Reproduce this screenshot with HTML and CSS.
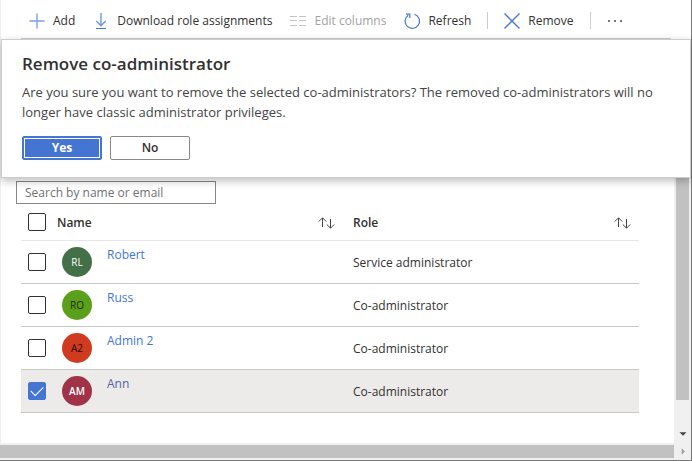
FILE: index.html
```html
<!DOCTYPE html>
<html lang="en">
<head>
<meta charset="utf-8">
<title>Classic administrators</title>
<link rel="stylesheet" href="styles.css">
</head>
<body>
<div class="window">
  <main class="content">
    <div class="toolbar" role="toolbar" aria-label="Commands">
      <button class="command" type="button">
        <svg class="icon" viewBox="0 0 16 16"><path d="M8 .500v15M.500 8h15" stroke="#7ea0e2" stroke-width="1.400"/></svg>
        Add
      </button>
      <button class="command" type="button">
        <svg class="icon" viewBox="0 0 16 16"><path d="M8 0v12.500M3.300 8 8 12.700 12.700 8" fill="none" stroke="#6f96e0" stroke-width="1.400"/><path d="M3 15.500h10" stroke="#4575d3"/></svg>
        Download role assignments
      </button>
      <button class="command" type="button" disabled>
        <svg class="icon" viewBox="0 0 16 16"><path d="M0 3.500h7M9 3.500h7M0 7.500h7M9 7.500h7M0 12.500h7M9 12.500h7" stroke="#c4c4c4"/></svg>
        Edit columns
      </button>
      <button class="command" type="button">
        <svg class="icon" viewBox="0 0 16 16"><path d="M10.500 1.300A7.200 7.200 0 1 1 4.200 2.200" fill="none" stroke="#4575d3" stroke-width="1.200"/><path d="M2 1.200H5.800V5" fill="none" stroke="#4575d3" stroke-width="1.200"/></svg>
        Refresh
      </button>
      <span class="separator"></span>
      <button class="command" type="button">
        <svg class="icon" viewBox="0 0 16 16"><path d="M.5.5l15 15M15.500.5l-15 15" stroke="#4575d3" stroke-width="1.300"/></svg>
        Remove
      </button>
      <span class="separator"></span>
      <button class="command" type="button" aria-label="More">
        <svg class="icon" viewBox="0 0 16 16"><path d="M1 7h2v2H1zM7 7h2v2H7zM13 7h2v2h-2z" fill="#777"/></svg>
      </button>
    </div>

    <input class="search" type="text" placeholder="Search by name or email" aria-label="Search by name or email">

    <table class="admins">
      <colgroup><col class="col-check"><col><col></colgroup>
      <thead>
        <tr>
          <th><input class="check" type="checkbox" aria-label="Select all"></th>
          <th><div class="heading">Name
            <svg class="sort" viewBox="0 0 17 12"><path d="M4.500 10V1M.8 4.500 4.500.8l3.700 3.700M12.500 2v9M8.800 7.500l3.700 3.700 3.700-3.700" fill="none" stroke="#444"/></svg></div></th>
          <th><div class="heading">Role
            <svg class="sort" viewBox="0 0 17 12"><path d="M4.500 10V1M.8 4.500 4.500.8l3.700 3.700M12.500 2v9M8.800 7.500l3.700 3.700 3.700-3.700" fill="none" stroke="#444"/></svg></div></th>
        </tr>
      </thead>
      <tbody>
        <tr>
          <td><input class="check" type="checkbox" aria-label="Select Robert"></td>
          <td><div class="person"><span class="avatar green">RL</span><a href="#">Robert</a></div></td>
          <td>Service administrator</td>
        </tr>
        <tr>
          <td><input class="check" type="checkbox" aria-label="Select Russ"></td>
          <td><div class="person"><span class="avatar lime">RO</span><a href="#">Russ</a></div></td>
          <td>Co-administrator</td>
        </tr>
        <tr>
          <td><input class="check" type="checkbox" aria-label="Select Admin 2"></td>
          <td><div class="person"><span class="avatar red">A2</span><a href="#">Admin 2</a></div></td>
          <td>Co-administrator</td>
        </tr>
        <tr class="selected">
          <td><input class="check" type="checkbox" aria-label="Select Ann" checked></td>
          <td><div class="person"><span class="avatar wine">AM</span><a href="#">Ann</a></div></td>
          <td>Co-administrator</td>
        </tr>
      </tbody>
    </table>
  </main>

  <div class="scroll-v"><span class="thumb-v"></span>
    <svg class="arrow" viewBox="0 0 16 16"><path d="M4 6h8l-4 4z" fill="#444"/></svg>
  </div>
  <div class="scroll-h"><span class="thumb-h"></span>
    <svg class="arrow" viewBox="0 0 16 16"><path d="M7 4v8l4-4z" fill="#a0a0a0"/></svg>
  </div>

  <section class="dialog" role="dialog" aria-labelledby="dialog-title">
    <h1 id="dialog-title">Remove co-administrator</h1>
    <p>Are you sure you want to remove the selected co-administrators? The removed co-administrators will no longer have classic administrator privileges.</p>
    <div class="actions">
      <button class="button primary" type="button">Yes</button>
      <button class="button" type="button">No</button>
    </div>
  </section>
</div>
</body>
</html>
```

FILE: styles.css
```css
* {
  box-sizing: border-box;
}

body {
  margin: 0;
  background: #fff;
  color: #323130;
  font-family: "Open Sans", "Noto Sans", sans-serif;
  font-size: 12px;
  line-height: 18px;
}

button,
input {
  font: inherit;
  color: inherit;
}

.window {
  position: relative;
  display: grid;
  grid-template-columns: 1fr 17px;
  grid-template-rows: 1fr 17px;
  min-height: 100vh;
  border-right: 1px solid #777;
  border-bottom: 1px solid #777;
}

.content {
  border-left: 1px solid #eee;
}

.toolbar {
  display: flex;
  align-items: center;
  gap: 18px;
  height: 39px;
  margin: 0 3px 0 20px;
  padding: 3px 8px 0;
  border-bottom: 1px solid #ccc;
}

.command {
  display: flex;
  align-items: center;
  gap: 8px;
  padding: 0;
  border: 0;
  background: none;
  white-space: nowrap;
}

.command:disabled {
  color: #a3a3a3;
}

.icon {
  flex: none;
  width: 16px;
  height: 16px;
}

.separator {
  width: 1px;
  height: 17px;
  margin: 0 -2px;
  background: #ccc;
}

.search {
  display: block;
  width: 200px;
  height: 23px;
  margin: 142px 0 0 15px;
  padding: 0 8px;
  border: 1px solid #8a8886;
}

.search::placeholder {
  color: #707070;
  opacity: 1;
}

.admins {
  width: calc(100% - 55px);
  margin: 0 35px 30px 20px;
  border-collapse: separate;
  border-spacing: 0;
  table-layout: fixed;
}

.col-check {
  width: 30px;
}

.admins th {
  height: 37px;
  padding: 2px 8px 0;
  border-bottom: 1px solid #e6e6e6;
  font-weight: 600;
  text-align: left;
}

.admins td {
  height: 43px;
  padding: 2px 8px 0;
  border-bottom: 1px solid #c8c8c8;
}

.admins th:first-child,
.admins td:first-child {
  padding: 0 0 0 7px;
}

.admins th:nth-child(2) {
  padding: 2px 10px 0 6px;
}

.admins td:nth-child(2) {
  padding: 0 11px;
}

.heading {
  display: flex;
  align-items: center;
  justify-content: space-between;
}

.sort {
  width: 17px;
  height: 12px;
}

.check {
  display: block;
  appearance: none;
  width: 18px;
  height: 18px;
  margin: 0;
  border: 1px solid #323130;
  border-radius: 2px;
  background: #fff;
}

.check:checked {
  border-color: #4575d3;
  background: #4575d3;
}

.check:checked::after {
  content: "";
  display: block;
  width: 11px;
  height: 6px;
  margin: 3px 0 0 2px;
  border: solid #fff;
  border-width: 0 0 1px 1px;
  transform: rotate(-45deg);
}

.person {
  display: flex;
  gap: 15px;
}

.person a {
  margin-top: -1px;
  color: #4575d3;
  text-decoration: none;
}

.avatar {
  width: 30px;
  height: 30px;
  border-radius: 50%;
  font-size: 10px;
  line-height: 30px;
  text-align: center;
}

.green {
  background: #437047;
  color: #fff;
}

.lime {
  background: #5ba01a;
  color: #1b2b08;
}

.red {
  background: #d03a1f;
  color: #2a0a05;
}

.wine {
  background: #a03348;
  color: #fff;
  font-weight: 600;
}

.selected {
  background: #edebe9;
}

.selected .person a {
  color: #4f63a8;
}

.scroll-v {
  display: flex;
  flex-direction: column;
  justify-content: space-between;
  margin-top: 39px;
  padding-left: 2px;
  background: #f0f0f0;
}

.thumb-v {
  width: 13px;
  height: 361px;
  background: #c1c1c1;
}

.scroll-h {
  grid-column: 1 / -1;
  display: flex;
  justify-content: space-between;
  padding: 2px 0 2px;
  background: #f0f0f0;
}

.thumb-h {
  flex: 1;
  background: #c1c1c1;
}

.arrow {
  width: 16px;
  height: 16px;
}

.scroll-v .arrow {
  width: 14px;
  margin-bottom: 1px;
}

.scroll-h .arrow {
  width: 17px;
  height: 13px;
}

.dialog {
  position: absolute;
  top: 39px;
  left: 1px;
  right: 0;
  padding: 14px 20px 17px;
  border: 1px solid #ccc;
  background: #fff;
  box-shadow: 0 3px 8px rgba(0, 0, 0, 0.25);
}

.dialog h1 {
  margin: 0 0 8px;
  font-size: 17px;
  font-weight: 600;
  line-height: 20px;
}

.dialog p {
  margin: 0 0 14px;
  color: #444;
  font-size: 13px;
  line-height: 20px;
}

.actions {
  display: flex;
  gap: 8px;
}

.button {
  width: 80px;
  height: 24px;
  padding: 0;
  border: 1px solid #8a8886;
  border-radius: 2px;
  background: #fff;
  font-weight: 600;
}

.primary {
  border-color: #4575d3;
  background: #4575d3;
  box-shadow: inset 0 0 0 1px #4575d3, inset 0 0 0 2px #fff;
  color: #fff;
  font-weight: 700;
}
```
